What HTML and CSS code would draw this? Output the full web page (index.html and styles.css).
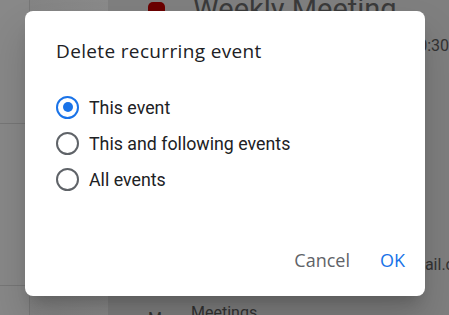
FILE: index.html
```html
<!DOCTYPE html>
<html lang="en">
<head>
    <meta charset="UTF-8">
    <meta name="viewport" content="width=device-width, initial-scale=1.0">
    <title>Delete recurring event</title>
    <link rel="stylesheet" href="styles.css">
</head>
<body>

    <div class="page">
        <!-- calendar behind the dialog -->
        <div class="sidebar">
            <div class="time-col">
                <div class="slot slot-1"></div>
                <div class="slot slot-2"></div>
            </div>
            <div class="side-fill"></div>
        </div>

        <div class="main">
            <div class="event-head">
                <span class="event-color"></span>
                <span class="event-title">Weekly Meeting</span>
            </div>
            <div class="event-line">Thursday, June 11 · 10:00 – 10:30</div>
            <div class="event-owner">Organizer · team@gmail.c</div>
            <div class="event-cal">
                <span class="cal-icon">M</span>
                <span>Meetings</span>
            </div>
        </div>

        <!-- dialog -->
        <div class="scrim">
            <div class="dialog">
                <h2 class="dialog-title">Delete recurring event</h2>

                <div class="options">
                    <label class="option">
                        <input type="radio" name="scope" value="this" checked>
                        <span class="radio"></span>
                        This event
                    </label>
                    <label class="option">
                        <input type="radio" name="scope" value="following">
                        <span class="radio"></span>
                        This and following events
                    </label>
                    <label class="option">
                        <input type="radio" name="scope" value="all">
                        <span class="radio"></span>
                        All events
                    </label>
                </div>

                <div class="actions">
                    <button class="text-btn cancel-btn">Cancel</button>
                    <button class="text-btn ok-btn">OK</button>
                </div>
            </div>
        </div>
    </div>

</body>
</html>
```

FILE: styles.css
```css
body {
    margin: 0;
    font-family: Roboto, "Liberation Sans", sans-serif;
    background-color: #7f7f7f;
}
.page {
    position: relative;
    width: 449px;
    height: 315px;
    overflow: hidden;
    display: flex;
    background-color: #7f7f7f;
}

/* Background calendar (already dimmed) */
.sidebar {
    width: 108px;
    flex-shrink: 0;
    display: flex;
    background-color: #888;
}
.time-col {
    width: 29px;
    border-right: 1px solid #777;
}
.slot {
    border-bottom: 1px solid #777;
}
.slot-1 {
    height: 123px;
}
.slot-2 {
    height: 161px;
}
.side-fill {
    flex: 1;
    background: linear-gradient(to right, #848484, #8a8a8a);
}
.main {
    flex: 1;
    padding-left: 40px;
    color: #333;
    white-space: nowrap;
}
.event-head {
    display: flex;
    align-items: center;
    gap: 28px;
    margin-top: -8px;
    height: 34px;
}
.event-color {
    width: 17px;
    height: 17px;
    border-radius: 5px;
    background-color: #6b0000;
    margin-top: 2px;
}
.event-title {
    font-size: 29px;
    color: #3a3a3a;
}
.event-line {
    margin-top: 10px;
    font-size: 16px;
    text-align: right;
}
.event-owner {
    margin-top: 200px;
    font-size: 16px;
    text-align: right;
    margin-right: -5px;
}
.event-cal {
    display: flex;
    gap: 26px;
    margin-top: 29px;
    font-size: 16px;
}
.cal-icon {
    width: 17px;
    padding-top: 6px;
}

/* Dialog */
.scrim {
    position: absolute;
    inset: 0;
}
.dialog {
    margin: 11px 0 0 25px;
    width: 400px;
    height: 285px;
    box-sizing: border-box;
    background-color: #fff;
    border-radius: 8px;
    box-shadow: 0 11px 15px -7px rgba(0, 0, 0, 0.2), 0 24px 38px 3px rgba(0, 0, 0, 0.14);
    padding: 27px 20px 0 31px;
    display: flex;
    flex-direction: column;
}
.dialog-title {
    margin: 0;
    font-family: "Open Sans", Roboto, sans-serif;
    font-weight: 400;
    font-size: 19px;
    color: #202124;
    letter-spacing: 0.35px;
}
.options {
    margin-top: 31px;
    display: flex;
    flex-direction: column;
    gap: 12px;
}
.option {
    display: flex;
    align-items: center;
    gap: 10px;
    height: 24px;
    font-size: 17.8px;
    color: #202124;
    cursor: pointer;
}
.option input {
    display: none;
}
.radio {
    width: 19px;
    height: 19px;
    border: 2px solid #5f6368;
    border-radius: 50%;
    display: flex;
    align-items: center;
    justify-content: center;
}
.option input:checked + .radio {
    border-color: #1a73e8;
}
.option input:checked + .radio::after {
    content: "";
    width: 10px;
    height: 10px;
    border-radius: 50%;
    background-color: #1a73e8;
}
.actions {
    margin-top: auto;
    margin-bottom: 18px;
    display: flex;
    justify-content: flex-end;
    gap: 8px;
}
.text-btn {
    background: none;
    border: none;
    padding: 6px 0 6px 8px;
    font-family: "Open Sans", Roboto, sans-serif;
    font-size: 18px;
    font-weight: 500;
    cursor: pointer;
}
.cancel-btn {
    color: #5f6368;
    margin-right: 14px;
}
.ok-btn {
    color: #1a73e8;
}
```
